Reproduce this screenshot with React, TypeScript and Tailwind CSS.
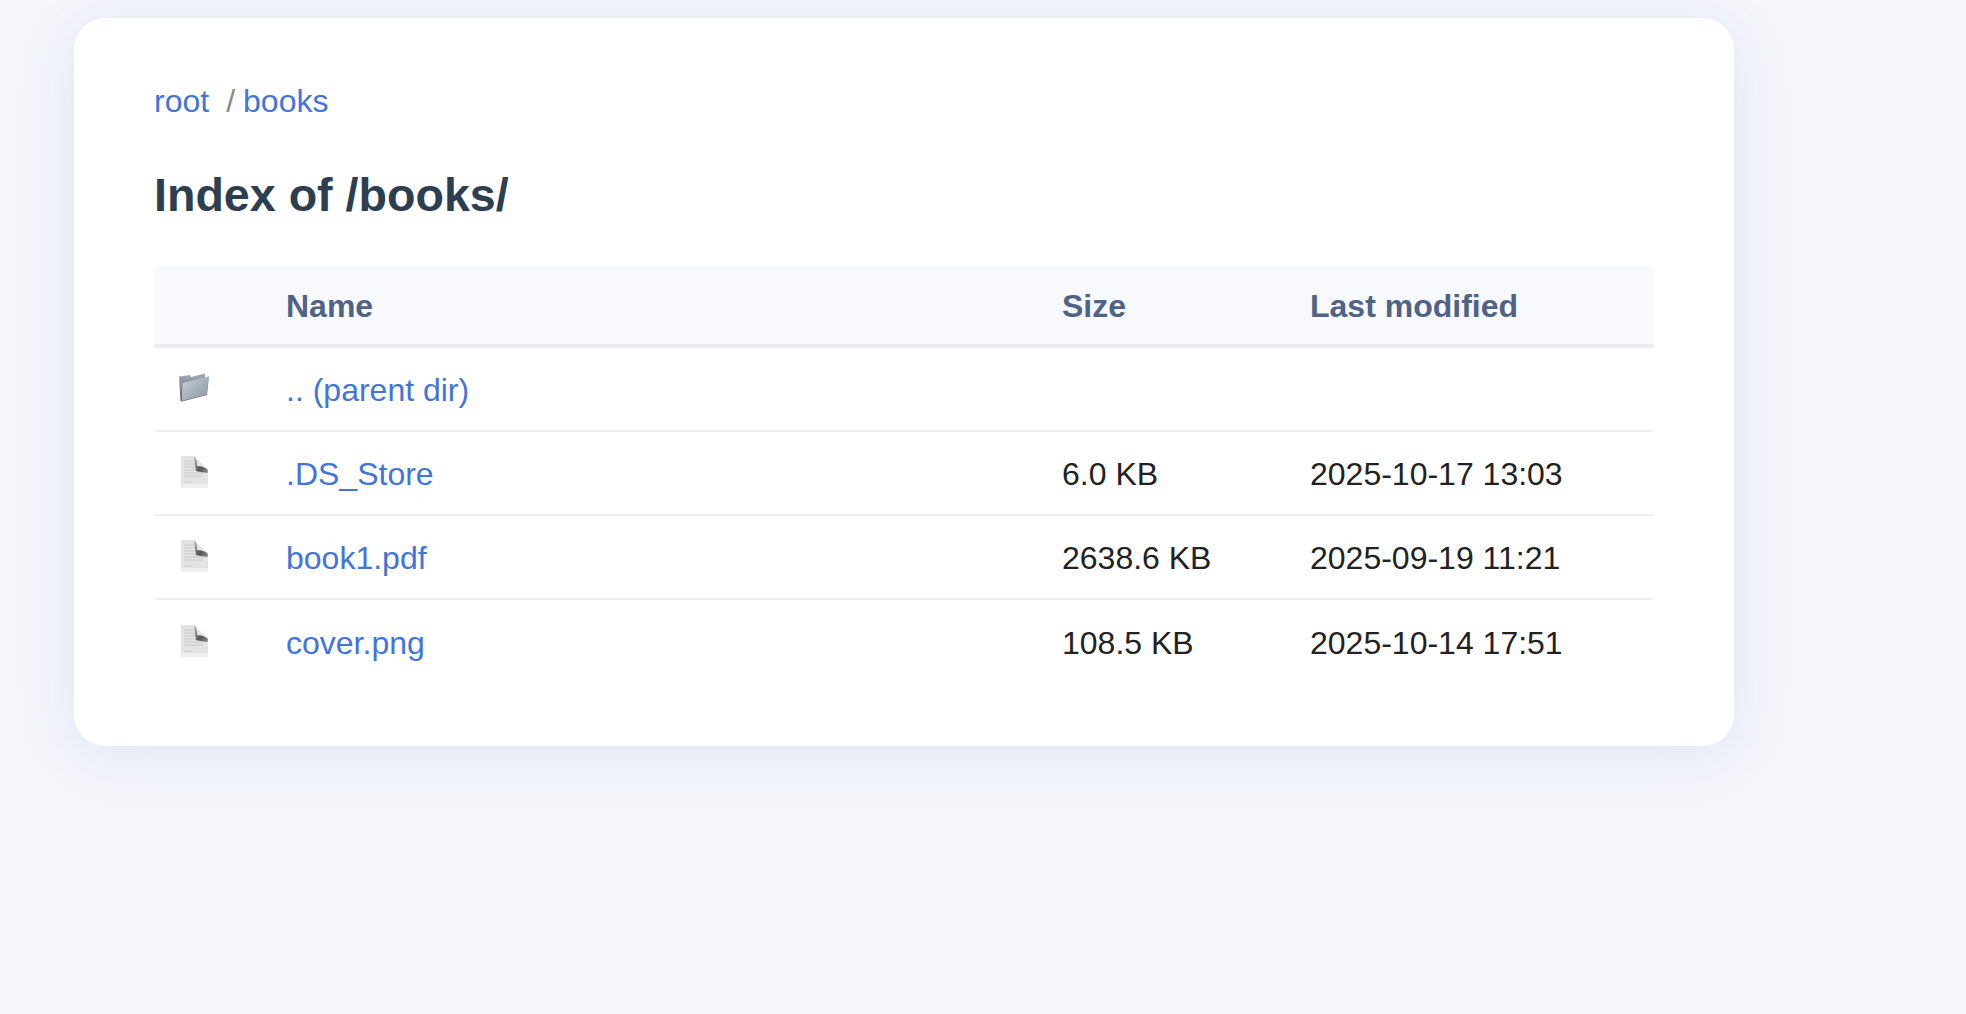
const rows = [
  { name: '.DS_Store', size: '6.0 KB', modified: '2025-10-17 13:03' },
  { name: 'book1.pdf', size: '2638.6 KB', modified: '2025-09-19 11:21' },
  { name: 'cover.png', size: '108.5 KB', modified: '2025-10-14 17:51' },
];

function FolderIcon() {
  return (
    <svg width="30" height="29" viewBox="0 0 30 29" className="block">
      <defs>
        <linearGradient id="folderFront" x1="0" y1="0" x2="1" y2="1">
          <stop offset="0" stopColor="#c9d1da" />
          <stop offset="1" stopColor="#87939f" />
        </linearGradient>
        <linearGradient id="folderBack" x1="0" y1="0" x2="0" y2="1">
          <stop offset="0" stopColor="#a3adb8" />
          <stop offset="1" stopColor="#56616d" />
        </linearGradient>
        <filter id="folderSoft">
          <feGaussianBlur stdDeviation="0.35" />
        </filter>
      </defs>
      <g filter="url(#folderSoft)">
        <path d="M0 3.5 L11 2 L12 4 L26 0.5 L26 4.5 L30 3.5 L28 22 L3 28.5 L1.5 28 Z" fill="url(#folderBack)" />
        <path d="M3.5 10 L29.5 3.5 L27.8 21.5 L2.8 28 Z" fill="url(#folderFront)" />
      </g>
    </svg>
  );
}

function FileIcon({ id }: { id: string }) {
  return (
    <svg width="27" height="32" viewBox="0 0 27 32" className="block">
      <defs>
        <linearGradient id={id} x1="0" y1="0" x2="1" y2="1">
          <stop offset="0" stopColor="#b4b4b4" />
          <stop offset="0.6" stopColor="#565656" />
          <stop offset="1" stopColor="#909090" />
        </linearGradient>
        <filter id={`${id}-soft`}>
          <feGaussianBlur stdDeviation="0.45" />
        </filter>
      </defs>
      <g filter={`url(#${id}-soft)`}>
        <path d="M0 0 H13 L27 14 V32 H0 Z" fill="#e3e3e3" />
        <path d="M3 5 H13 M3 8 H14 M3 11 H15 M3 14 H15 M3 17 H22 M3 20 H22" stroke="#d2d2d2" strokeWidth="1.5" />
        <path d="M3 26 H11" stroke="#cacaca" strokeWidth="1" />
        <path d="M0 28 H27 V32 H0 Z" fill="#efefef" />
        <path d="M13 0 C16 3 16 7 16 10 C20 10 24 11 27 14 L26.5 17 C22 16 17 16 15 15 C14 10 14 5 13 0 Z" fill={`url(#${id})`} />
      </g>
    </svg>
  );
}

export default function App() {
  return (
    <div className="min-h-[1014px] bg-[#f4f6fb] pt-[18px] pl-[74px] font-['Liberation_Sans',Arial,sans-serif]">
      <div className="w-[1660px] h-[728px] bg-white rounded-[32px] px-20 pt-[63px] shadow-[0_8px_60px_rgba(60,90,170,0.11)]">
        <div className="text-[32px] leading-[40px] text-[#888]">
          <a className="text-[#4374d9]">root</a>
          <span className="ml-[17px] mr-[8px]">/</span>
          <a className="text-[#4374d9]">books</a>
        </div>
        <h1 className="mt-[48px] text-[46.6px] leading-[52px] font-bold text-[#2c3e50]">Index of /books/</h1>
        <table className="mt-[46px] w-[1500px] table-fixed border-separate border-spacing-0 text-[32px] text-[#222]">
          <colgroup>
            <col className="w-[132px]" />
            <col className="w-[776px]" />
            <col className="w-[248px]" />
            <col />
          </colgroup>
          <thead>
            <tr className="bg-[#f8f9fd] text-left text-[#4f6386]">
              <th className="h-[81px] border-b-4 border-[#e9ecf5]" />
              <th className="h-[81px] border-b-4 border-[#e9ecf5] font-bold">Name</th>
              <th className="h-[81px] border-b-4 border-[#e9ecf5] font-bold">Size</th>
              <th className="h-[81px] border-b-4 border-[#e9ecf5] font-bold">Last modified</th>
            </tr>
          </thead>
          <tbody>
            <tr>
              <td className="h-[84px] border-b-2 border-[#eef0f5] pl-[25px] pb-[4px]"><FolderIcon /></td>
              <td className="h-[84px] border-b-2 border-[#eef0f5] pt-[2px]"><a className="text-[#4374d9]">.. (parent dir)</a></td>
              <td className="h-[84px] border-b-2 border-[#eef0f5]" />
              <td className="h-[84px] border-b-2 border-[#eef0f5]" />
            </tr>
            {rows.map((r, i) => {
              const cell = i < rows.length - 1 ? 'h-[84px] border-b-2 border-[#eef0f5]' : 'h-[84px]';
              return (
                <tr key={r.name}>
                  <td className={`${cell} pl-[27px] pb-[2px]`}><FileIcon id={`file-${i}`} /></td>
                  <td className={`${cell} pt-[2px]`}><a className="text-[#4374d9]">{r.name}</a></td>
                  <td className={`${cell} pt-[2px]`}>{r.size}</td>
                  <td className={`${cell} pt-[2px]`}>{r.modified}</td>
                </tr>
              );
            })}
          </tbody>
        </table>
      </div>
    </div>
  );
}
